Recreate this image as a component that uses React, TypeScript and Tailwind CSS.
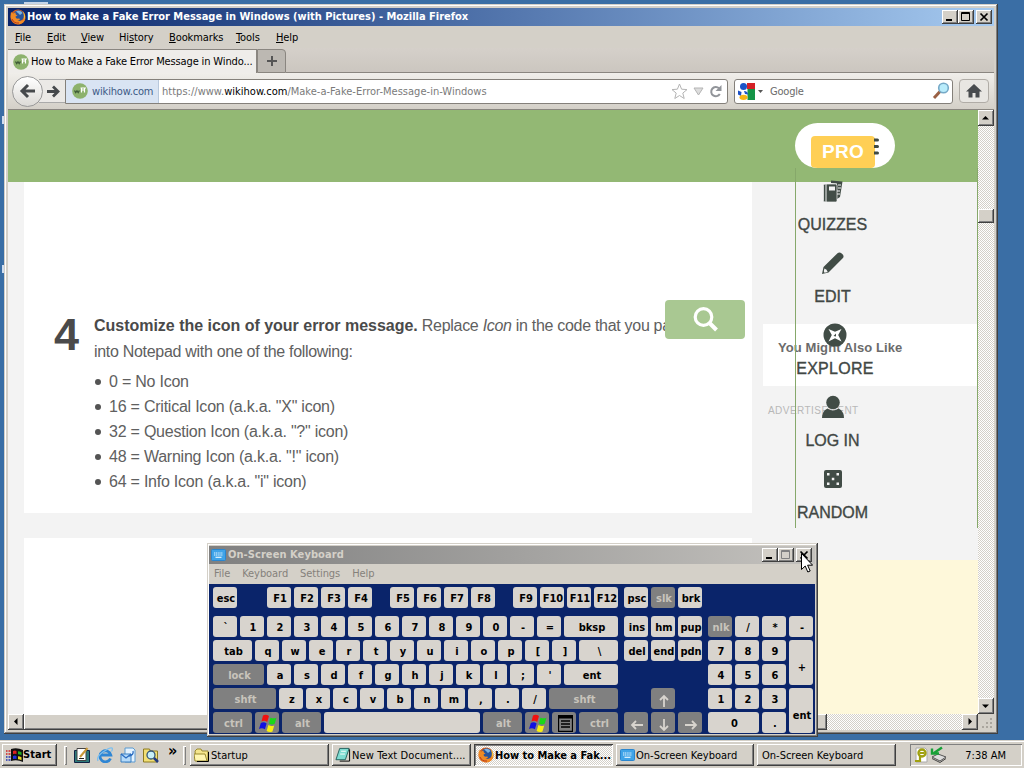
import type { ReactNode } from "react";
import clsx from "clsx";

const RAISED = "bg-[#d4d0c8] shadow-[inset_-1px_-1px_#404040,inset_1px_1px_#fff,inset_-2px_-2px_#808080]";
const DITHER = "bg-[conic-gradient(#fff_25%,#d4d0c8_0_50%,#fff_0_75%,#d4d0c8_0)] bg-[length:2px_2px]";
const UI = "font-['DejaVu_Sans_Condensed','DejaVu_Sans',sans-serif]";

function FirefoxIcon({ size = 16 }: { size?: number }) {
  return (
    <svg width={size} height={size} viewBox="0 0 16 16" className="shrink-0">
      <circle cx="8" cy="8" r="7.6" fill="#d9601a" />
      <circle cx="8.6" cy="6.6" r="5.4" fill="#27549c" />
      <path d="M6 2.5C8 1 11 1.500 12.500 4L10 6L8 4Z" fill="#7db4e0" />
      <path d="M1 3C0 8 1 13 6 15c5 1.500 9-2 9.300-6C13 12 10 12.500 7.500 11.500C10 11.500 10.500 10 9 9.500C7 10 5.500 9 5.600 7.500L7.500 6.500C6 6 5.500 5 5.500 3.500C4 4 3.500 4.500 3 4.500Z" fill="#f08a24" />
      <path d="M13 2.500c2 2 2.500 5 1.800 7l-1.300 1.500c.8-3 .4-6-.5-8.500Z" fill="#f8c73a" />
      <path d="M2 10c1 3 4 4.500 7 4" stroke="#b8381c" strokeWidth="1" fill="none" />
    </svg>
  );
}

function WikiIcon() {
  return (
    <svg width="16" height="16" viewBox="0 0 16 16" className="shrink-0">
      <circle cx="8" cy="8" r="7.800" fill="#8db26d" />
      <path d="M2.500 7.500l1.200 2L5 7.800l1.200 1.700l1.200-2" stroke="#3f5c38" strokeWidth="1.300" fill="none" />
      <path d="M9.500 5v4.500M9.500 7h3M12.500 5v4.500M8.500 5h5.500" stroke="#fff" strokeWidth="1.200" fill="none" />
    </svg>
  );
}

function KeyboardIcon() {
  return (
    <svg width="15" height="12" viewBox="0 0 15 12" className="shrink-0">
      <rect x="0.500" y="0.500" width="14" height="11" rx="1" fill="#3fa4e8" stroke="#2a86cf" />
      <path d="M3 4h9M3 6h9" stroke="#e6f6ff" strokeWidth="1.200" strokeDasharray="1.200 .6" />
      <path d="M4.500 8.300h6" stroke="#e6f6ff" strokeWidth="1.200" />
    </svg>
  );
}

function WinFlag({ size = 20 }: { size?: number }) {
  return (
    <svg width={size} height={size} viewBox="0 0 20 20" className="-mt-[2px]">
      <path d="M5 1.500q3-1.500 6 .5l-1.800 6q-2.700-2-5.700-.5Z" fill="#f01010" />
      <path d="M12.500 3.500q3 1.600 6 .2l-1.800 6q-3 1.500-5.700-.3Z" fill="#18d818" />
      <path d="M2.800 9q3-1.500 5.800.4l-1.700 5.800q-3-1.800-5.900-.3Z" fill="#1010e0" />
      <path d="M10.400 11q3 1.800 5.800.4l-1.700 6q-3 1.500-5.900-.5Z" fill="#f8f010" />
    </svg>
  );
}

function CaptionButton({ kind, faded }: { kind: "min" | "max" | "close"; faded?: boolean }) {
  return (
    <div className={clsx("h-[14px] w-4", RAISED)}>
      <svg width="16" height="14" viewBox="0 0 16 14" fill="none" stroke={faded ? "#808080" : "#000"}>
        {kind === "min" && <path d="M4 10h6" strokeWidth="2" stroke="#000" />}
        {kind === "max" && <path d="M3.500 2.500h8v8h-8zM3 3.500h9" />}
        {kind === "close" && <path d="M4.500 3.500l7 7M11.500 3.500l-7 7" strokeWidth="1.700" stroke="#000" />}
      </svg>
    </div>
  );
}

function ScrollButton({ d }: { d: string }) {
  return (
    <div className={clsx("size-4 shrink-0", RAISED)}>
      <svg width="16" height="16" viewBox="0 0 16 16"><path d={d} /></svg>
    </div>
  );
}

function TitleBar() {
  return (
    <div className="flex h-[18px] items-center bg-linear-to-r from-[#0a246a] to-[#a6caf0] pr-[2px] pl-[2px]">
      <FirefoxIcon />
      <span className="mt-px ml-px text-[11px] font-bold tracking-[-0.01px] whitespace-nowrap text-white">
        How to Make a Fake Error Message in Windows (with Pictures) - Mozilla Firefox
      </span>
      <div className="ml-auto flex">
        <CaptionButton kind="min" />
        <CaptionButton kind="max" />
        <div className="ml-[2px]"><CaptionButton kind="close" /></div>
      </div>
    </div>
  );
}

const menus = [
  { label: "File", w: "w-8" }, { label: "Edit", w: "w-[34px]" }, { label: "View", w: "w-[38px]" },
  { label: "History", w: "w-[50px]" }, { label: "Bookmarks", w: "w-[67px]" },
  { label: "Tools", w: "w-10" }, { label: "Help", w: "w-10" },
];

function MenuBar() {
  return (
    <div className="flex h-[22px] items-center pt-[2px] pl-[7px] text-[11px] tracking-[-0.1px]">
      {menus.map((m) => (
        <span key={m.label} className={clsx(m.w, "shrink-0")}>
          {m.label === "History"
            ? <>Hi<u className="underline-offset-1">s</u>tory</>
            : <><u className="underline-offset-1">{m.label[0]}</u>{m.label.slice(1)}</>}
        </span>
      ))}
    </div>
  );
}

function TabStrip() {
  return (
    <div className="flex h-[25px] bg-linear-to-b from-[#d5d0ca] to-[#cbc6bf] pt-px">
      <div className="flex w-[249px] items-center border-t border-r border-[#8a8680] bg-[#efedea] pl-[5px] text-[11px]">
        <WikiIcon />
        <span className="mt-[2px] ml-[2px] tracking-[-0.14px] whitespace-nowrap">How to Make a Fake Error Message in Windo...</span>
      </div>
      <div className="flex w-[29px] items-center justify-center rounded-tr-sm border border-[#8a8680] bg-[#bcb8b2]">
        <svg width="12" height="12" viewBox="0 0 12 12"><path d="M6 1v10M1 6h10" stroke="#555" strokeWidth="2" /></svg>
      </div>
      <div className="flex-1 border-b border-[#8a8680]" />
    </div>
  );
}

function NavBar() {
  return (
    <div className="flex h-[37px] items-center border-b border-[#8a8680] bg-linear-to-b from-[#f0eeea] to-[#d4d0c8] pl-1 text-[11px]">
      <div className="z-10 flex size-[31px] items-center justify-center rounded-full border border-[#999] bg-linear-to-b from-white to-[#dcdad6]">
        <svg width="17" height="16" viewBox="0 0 17 16"><path d="M9 2L3 8l6 6M3.500 8H16" stroke="#46494c" strokeWidth="3" fill="none" /></svg>
      </div>
      <div className="-ml-1 flex h-6 w-[26px] items-center justify-center border-y border-[#aaa] bg-[#ebe9e6] pl-[2px]">
        <svg width="13" height="13" viewBox="0 0 13 13"><path d="M6 1.500l5 5l-5 5M0 6.500h10" stroke="#46494c" strokeWidth="2.800" fill="none" /></svg>
      </div>
      <div className="flex h-[25px] w-[663px] shrink-0 items-center rounded-r-[3px] border border-[#84807a] bg-white">
        <div className="flex h-full w-[93px] shrink-0 items-center border-r border-[#b8c8dc] bg-[#d9e4f3] pl-[6px]">
          <WikiIcon />
          <span className="mt-[2px] ml-1 tracking-[-0.15px] text-[#3c5a86]">wikihow.com</span>
        </div>
        <span className="mt-[2px] ml-[3px] tracking-[0.02px] whitespace-nowrap text-[#7a7a7a]">
          https://www.<span className="text-black">wikihow.com</span>/Make-a-Fake-Error-Message-in-Windows
        </span>
        <div className="mr-[5px] ml-auto flex items-center gap-[5px]">
          <svg width="17" height="17" viewBox="0 0 17 17"><path d="M8.500 1l2.100 5.200l5.400.4l-4.200 3.500l1.400 5.400l-4.700-3l-4.700 3l1.400-5.400L1 6.600l5.400-.4Z" fill="#fff" stroke="#b4b4b4" /></svg>
          <svg width="11" height="9" viewBox="0 0 11 9"><path d="M1 1h9L5.500 8Z" fill="#ddd" stroke="#b4b4b4" /></svg>
          <svg width="13" height="13" viewBox="0 0 13 13"><path d="M10 3.300A4.600 4.600 0 1 0 10.800 9" fill="none" stroke="#92959a" strokeWidth="2" /><path d="M12.500 0v6h-6Z" fill="#92959a" /></svg>
        </div>
      </div>
      <div className="ml-[6px] flex h-[25px] w-[219px] shrink-0 items-center rounded-[3px] border border-[#84807a] bg-white pl-[3px]">
        <svg width="17" height="17" viewBox="0 0 17 17">
          <path d="M9 0h8v6H9Z" fill="#d42127" />
          <path d="M9.500 6H17v11H9.500Z" fill="#159447" />
          <circle cx="5.500" cy="3.500" r="3.500" fill="#1b54c8" />
          <path d="M0 7.500l3.500 1.500l-.5 4l-3-1.500Z" fill="#1b4fc4" />
          <path d="M6 8q4 0 4 3.500L7 11Z" fill="#1b54c8" />
          <ellipse cx="5.500" cy="14.300" rx="4" ry="2.600" fill="#f4b515" />
        </svg>
        <svg width="5" height="3" viewBox="0 0 5 3" className="ml-[3px]"><path d="M0 0h5L2.500 3Z" fill="#555" /></svg>
        <span className="mt-[2px] ml-[7px] tracking-[-0.2px] text-[#6a6a6a]">Google</span>
        <svg width="18" height="18" viewBox="0 0 18 18" className="mr-[2px] ml-auto">
          <path d="M2 16L8 9.500" stroke="#9a6044" strokeWidth="3" /><circle cx="11.500" cy="6" r="4.800" fill="#b9ecfb" stroke="#76a9c7" strokeWidth="1.600" />
        </svg>
      </div>
      <div className="ml-[6px] flex h-6 w-[30px] items-center justify-center rounded-sm border border-[#b0aca6] bg-[#e8e6e2]">
        <svg width="16" height="14" viewBox="0 0 16 14"><path d="M8 0L16 7.500H13.500V13.500H9.500V9H6.500V13.500H2.500V7.500H0Z" fill="#484b4e" /></svg>
      </div>
    </div>
  );
}

const iconCodes = [
  "0 = No Icon",
  '16 = Critical Icon (a.k.a. "X" icon)',
  '32 = Question Icon (a.k.a. "?" icon)',
  '48 = Warning Icon (a.k.a. "!" icon)',
  '64 = Info Icon (a.k.a. "i" icon)',
];

function Article() {
  return (
    <div className="flex w-[728px] shrink-0 flex-col gap-[25px] font-['Liberation_Sans',Arial,sans-serif] text-[16px] text-[#606060]">
      <div className="flex h-[331px] bg-white pt-[131px] pl-[30px]">
        <div className="mt-[-3px] w-10 text-[45px] leading-[50px] font-bold text-[#4a4a4a]">4</div>
        <div>
          <p className="leading-[26px] tracking-[-0.3px] whitespace-nowrap">
            <b className="tracking-[-0.02px] text-[#4a4a4a]">Customize the icon of your error message.</b> Replace <i>Icon</i> in the code that you pasted
            <br />
            into Notepad with one of the following:
          </p>
          <ul className="mt-1 leading-[25px] tracking-[-0.23px]">
            {iconCodes.map((t) => (
              <li key={t} className="flex items-center">
                <span className="mt-px mr-2 ml-px size-[6px] rounded-full bg-[#545454]" />
                {t}
              </li>
            ))}
          </ul>
        </div>
      </div>
      <div className="flex-1 bg-white" />
    </div>
  );
}

const sideItems: { label: string; icon: ReactNode }[] = [
  {
    label: "QUIZZES",
    icon: (
      <svg width="24" height="24" viewBox="0 0 24 24" fill="#414c46">
        <path d="M10 1.500L21.500 2.500L19 18L16 20V4.500L10 4Z" /><path d="M17 6h3M17 9h3M16 12h3M16 15h3" stroke="#f3f3f3" strokeWidth="1.200" />
        <path d="M4 5h10.500q1.500 0 1.500 1.500v15q0 1.500-1.500 1.500H4q-1.500 0-1.500-1.500v-15Q2.500 5 4 5Z" stroke="#f3f3f3" strokeWidth=".7" /><path d="M5 5v18" stroke="#f3f3f3" strokeWidth="1" /><path d="M8 7.500h6v4H8Z" fill="#f3f3f3" />
      </svg>
    ),
  },
  {
    label: "EDIT",
    icon: (
      <svg width="24" height="24" viewBox="0 0 24 24">
        <path d="M1 23l1.500-7L16.500 2.200q2-1.700 4.200.3l.8.800q2 2 .2 4L7.500 21.500Z" fill="#414c46" /><path d="M3.500 17.500q2.500.5 3.200 3.500l-3 .7q-1.500-.6-.2-4.200Z" fill="#f3f3f3" />
      </svg>
    ),
  },
  {
    label: "EXPLORE",
    icon: (
      <svg width="24" height="24" viewBox="0 0 24 24">
        <circle cx="12" cy="12" r="11.500" fill="#414c46" />
        <path d="M5.500 6L12 8.800L18.500 6L15.200 12L18.500 18.500L12 15.300L5.500 18.500L8.800 12Z" fill="#fff" />
        <path d="M13 10.500v3L10.500 13Z" fill="#414c46" />
      </svg>
    ),
  },
  {
    label: "LOG IN",
    icon: (
      <svg width="24" height="24" viewBox="0 0 24 24" fill="#414c46">
        <circle cx="12" cy="7.500" r="6.800" /><path d="M1 23q0-7 5.500-9.500q5.500 4 11 0Q23 16 23 23Z" />
      </svg>
    ),
  },
  {
    label: "RANDOM",
    icon: (
      <svg width="24" height="24" viewBox="0 0 24 24">
        <rect x="3" y="3" width="18" height="18" rx="2" fill="#414c46" />
        <path d="M6 6h2.500v2.500H6zM15.500 6H18v2.500h-2.500zM10.800 10.800h2.500v2.500h-2.500zM6 15.500h2.500V18H6zM15.500 15.500H18V18h-2.500z" fill="#f3f3f3" />
      </svg>
    ),
  },
];

function SideMenu() {
  return (
    <div className="absolute top-[58px] left-[787px] h-[360px] w-[183px] border-x border-[#86a86a] pt-[11px] font-['Liberation_Sans',Arial,sans-serif]">
      {sideItems.map((s) => (
        <div key={s.label} className={clsx("flex h-[72px] flex-col items-center", s.label === "EXPLORE" ? "w-[78px] tracking-[0.3px]" : "w-[73px]")}>
          {s.icon}
          <span className="mt-3 text-[16px] leading-5 whitespace-nowrap text-[#414744] [-webkit-text-stroke:0.35px_#414744]">{s.label}</span>
        </div>
      ))}
    </div>
  );
}

function Page() {
  return (
    <div className="relative flex h-[604px] w-[970px] flex-col overflow-hidden bg-[#f3f3f3]">
      <div className="flex h-[72px] shrink-0 items-start bg-[#93b874] pt-[13px] pl-[787px]">
        <div className="flex h-[45px] w-[100px] items-end overflow-hidden rounded-full bg-white pl-4">
          <div className="flex h-8 w-16 items-center justify-center rounded-[4px] bg-[#ffcf55] pt-px font-['Liberation_Sans',Arial,sans-serif] text-[19px] font-bold tracking-[0.3px] text-white">PRO</div>
          <svg width="5" height="17" viewBox="0 0 5 17" className="-ml-px mb-[13px]"><path d="M0 2h3.500M0 8.500h3.500M0 15h3.500" stroke="#3f4a44" strokeWidth="3" strokeLinecap="round" /></svg>
        </div>
      </div>
      <div className="flex flex-1 pl-4">
        <Article />
        <div className="ml-[11px] flex w-[215px] flex-col pt-[142px] font-['Liberation_Sans',Arial,sans-serif]">
          <div className="flex h-[62px] items-center bg-white pb-[15px] pl-[15px] text-[13px] font-bold tracking-[0.08px] text-[#6b6b6b]">You Might Also Like</div>
          <div className="mt-[17px] pl-[5px] text-[10px] leading-4 tracking-[0.45px] text-[#b8b8b8]">ADVERTISEMENT</div>
          <div className="mt-[141px] flex-1 bg-[#fef8da]" />
        </div>
      </div>
      <SideMenu />
      {/* floating search button */}
      <div className="absolute top-[190px] left-[657px] flex h-[39px] w-20 items-center justify-center rounded-[4px] bg-[#a9c892]">
        <svg width="27" height="27" viewBox="0 0 27 27" fill="none" stroke="#fff" strokeWidth="3.200"><circle cx="11.500" cy="11" r="8.300" /><path d="M17.500 17l7 7" strokeWidth="4" /></svg>
      </div>
    </div>
  );
}

function BrowserWindow() {
  return (
    <div className="absolute top-1 left-1 w-[994px] bg-[#d4d0c8] p-1 shadow-[inset_-1px_-1px_#404040,inset_1px_1px_#d4d0c8,inset_-2px_-2px_#808080,inset_2px_2px_#fff]">
      <TitleBar />
      <MenuBar />
      <TabStrip />
      <NavBar />
      <div className="flex">
        <Page />
        <div className={clsx("flex h-[604px] w-4 flex-col", DITHER)}>
          <ScrollButton d="M4 9.500h7L7.500 6Z" />
          <div className={clsx("mt-[83px] h-[14px]", RAISED)} />
          <div className="mt-auto"><ScrollButton d="M4 6.500h7L7.500 10Z" /></div>
        </div>
      </div>
      <div className="flex h-4">
        <div className={clsx("flex w-[970px]", DITHER)}>
          <ScrollButton d="M9.500 4v7L6 7.500Z" />
          <div className={clsx("w-[803px]", RAISED)} />
          <div className="ml-auto"><ScrollButton d="M6.500 4v7L10 7.500Z" /></div>
        </div>
        <svg width="16" height="16" viewBox="0 0 16 16" fill="#aaa69e"><path d="M12 4h2v2h-2zM8 8h2v2H8zM12 8h2v2h-2zM4 12h2v2H4zM8 12h2v2H8zM12 12h2v2h-2z" /></svg>
      </div>
    </div>
  );
}

type KeyDef = { k: ReactNode; w?: string; dark?: boolean; ml?: string };

function Key({ k, w = "w-6", dark, ml, tall }: KeyDef & { tall?: boolean }) {
  return (
    <div
      className={clsx(
        "flex shrink-0 items-center justify-center overflow-hidden rounded-[3px] pl-[2px] text-[11px] font-bold whitespace-nowrap",
        w, ml, tall ? "h-[45px] pt-3" : "h-[21px] pt-1",
        dark ? "bg-[#808080] text-[#c8c4bc]" : "bg-[#d8d4ce] text-black",
      )}
    >
      {k}
    </div>
  );
}

const keysOf = (s: string): KeyDef[] => s.split(" ").map((k) => ({ k }));

const menuGlyph = (
  <svg width="15" height="17" viewBox="0 0 15 17" className="-mt-[3px]"><path d="M.5.500h14v16H.5ZM3 6h9M3 9h9M3 12h9" fill="#808080" stroke="#000" strokeWidth="1.300" /><path d="M1 2h13" stroke="#000" strokeWidth="3" /></svg>
);

function Arrow({ d }: { d: string }) {
  return <svg width="14" height="14" viewBox="0 0 14 14"><path d={d} fill="none" stroke="#d8d4ce" strokeWidth="1.800" /></svg>;
}

const fRow: KeyDef[] = [
  { k: "esc" }, { k: "F1", ml: "ml-[27px]" }, ...keysOf("F2 F3 F4"),
  { k: "F5", ml: "ml-[15px]" }, ...keysOf("F6 F7 F8"),
  { k: "F9", ml: "ml-[15px]" }, ...keysOf("F10 F11 F12"),
];

const mainRows: KeyDef[][] = [
  [...keysOf("` 1 2 3 4 5 6 7 8 9 0 - ="), { k: "bksp", w: "w-[54px]" }],
  [{ k: "tab", w: "w-[39px]" }, ...keysOf("q w e r t y u i o p [ ]"), { k: "\\", w: "w-[39px]" }],
  [{ k: "lock", w: "w-[51px]", dark: true }, ...keysOf("a s d f g h j k l ; '"), { k: "ent", w: "w-[54px]" }],
  [{ k: "shft", w: "w-[63px]", dark: true }, ...keysOf("z x c v b n m , . /"), { k: "shft", w: "w-[69px]", dark: true }],
  [
    { k: "ctrl", w: "w-[39px]", dark: true }, { k: <WinFlag />, dark: true }, { k: "alt", w: "w-[39px]", dark: true },
    { k: "", w: "w-[156px]" },
    { k: "alt", w: "w-[39px]", dark: true }, { k: <WinFlag />, dark: true }, { k: menuGlyph, dark: true }, { k: "ctrl", w: "w-[39px]", dark: true },
  ],
];

function KeyRow({ keys }: { keys: KeyDef[] }) {
  return <div className="flex gap-[3px]">{keys.map((key, i) => <Key key={i} {...key} />)}</div>;
}

function OnScreenKeyboard() {
  return (
    <div className="absolute top-[543px] left-[207px] h-[194px] w-[611px] bg-[#d4d0c8] p-[3px] pl-[2px] shadow-[inset_-1px_-1px_#404040,inset_1px_1px_#d4d0c8,inset_-2px_-2px_#808080,inset_2px_2px_#fff]">
      <div className="flex h-[18px] items-center bg-linear-to-r from-[#808080] to-[#c4c2be] pr-[3px] pl-[2px]">
        <KeyboardIcon />
        <span className="mt-px ml-[2px] text-[11px] font-bold tracking-[0.07px] text-[#d4d0c8]">On-Screen Keyboard</span>
        <div className="ml-auto flex">
          <CaptionButton kind="min" />
          <CaptionButton kind="max" faded />
          <div className="ml-[2px]"><CaptionButton kind="close" /></div>
        </div>
      </div>
      <div className="flex h-5 items-center gap-[12px] pt-px pl-[5px] text-[11px] tracking-[-0.07px] text-[#85817b]">
        <span>File</span><span>Keyboard</span><span>Settings</span><span>Help</span>
      </div>
      <div className="flex h-[150px] gap-[6px] bg-[#0a246a] pt-[3px] pl-1">
        <div className="flex w-[405px] flex-col gap-[3px]">
          <div className="mb-[5px]"><KeyRow keys={fRow} /></div>
          {mainRows.map((r, i) => <KeyRow key={i} keys={r} />)}
        </div>
        <div className="flex w-[78px] flex-col gap-[3px]">
          <div className="mb-[5px]"><KeyRow keys={[{ k: "psc" }, { k: "slk", dark: true }, { k: "brk" }]} /></div>
          <KeyRow keys={keysOf("ins hm pup")} />
          <KeyRow keys={keysOf("del end pdn")} />
          <div className="mt-6"><KeyRow keys={[{ k: <Arrow d="M7 13V2M3 6l4-4l4 4" />, dark: true, ml: "ml-[27px]" }]} /></div>
          <KeyRow
            keys={[
              { k: <Arrow d="M13 7H2M6 3L2 7l4 4" />, dark: true },
              { k: <Arrow d="M7 1v11M3 8l4 4l4-4" />, dark: true },
              { k: <Arrow d="M1 7h11M8 3l4 4l-4 4" />, dark: true },
            ]}
          />
        </div>
        <div className="flex flex-col gap-[3px] pt-[29px]">
          <KeyRow keys={[{ k: "nlk", dark: true }, ...keysOf("/ * -")]} />
          <div className="flex gap-[3px]">
            <div className="flex flex-col gap-[3px]">
              <KeyRow keys={keysOf("7 8 9")} />
              <KeyRow keys={keysOf("4 5 6")} />
              <KeyRow keys={keysOf("1 2 3")} />
              <KeyRow keys={[{ k: "0", w: "w-[51px]" }, { k: "." }]} />
            </div>
            <div className="flex flex-col gap-[3px]">
              <Key k="+" tall />
              <Key k="ent" tall />
            </div>
          </div>
        </div>
      </div>
    </div>
  );
}

const tasks: { label: string; w: string; icon?: ReactNode; active?: boolean }[] = [
  {
    label: "Startup", w: "w-[139px]",
    icon: <svg width="16" height="14" viewBox="0 0 16 14"><path d="M1 3l2-2h4l1 2h6v10H2Z" fill="#f5e68c" stroke="#9a8a30" /><path d="M1 13L0 6h11l2 7Z" fill="#fff6b0" stroke="#9a8a30" /><path d="M14.500 4v9.500H3" fill="none" stroke="#000" /></svg>,
  },
  {
    label: "New Text Document....", w: "w-[139px] tracking-[0.1px]",
    icon: <svg width="16" height="16" viewBox="0 0 17 16" className="-ml-px"><path d="M5 1h10L11 13H1Z" fill="#7fdcd2" stroke="#20605c" /><path d="M6.500 4h5M5.500 7h5" stroke="#fff" /><path d="M15.500 2v12.500H5" fill="none" stroke="#000" /></svg>,
  },
  { label: "How to Make a Fak...", w: "w-[139px]", icon: <FirefoxIcon />, active: true },
  { label: "On-Screen Keyboard", w: "w-[138px]", icon: <KeyboardIcon /> },
  { label: "On-Screen Keyboard", w: "w-[139px]" },
];

function Divider() {
  return <div className="h-[19px] w-[3px] bg-[#d4d0c8] shadow-[inset_1px_1px_#fff,inset_-1px_-1px_#808080]" />;
}

function Taskbar() {
  return (
    <div className="absolute bottom-0 left-0 flex h-7 w-full items-center border-t border-[#d4d0c8] bg-[#d4d0c8] pt-px pl-[2px] text-[11px] shadow-[inset_0_1px_#fff]">
      <div className={clsx("flex h-[22px] w-[55px] items-center pl-1 font-bold", RAISED)}>
        <svg width="17" height="15" viewBox="0 0 17 15">
          <path d="M5 1q6-2 12 1v12q-6-3-12-1Z" fill="#111" /><path d="M7 3q2-.8 3.500 0v3Q9 5.300 7 6Z" fill="#e02020" /><path d="M12 3.300q2 0 3.500 1v3Q14 6.500 12 6.300Z" fill="#20b020" /><path d="M7 8q2-.8 3.500 0v3Q9 10.300 7 11Z" fill="#2030e0" /><path d="M12 8.300q2 0 3.500 1v3q-1.500-.8-3.500-1Z" fill="#e8d820" />
          <path d="M0 3h1.500M2.500 3h2M0 6h1.500M2.500 6h2" stroke="#d02020" strokeWidth="1.500" /><path d="M0 9h1.500M2.500 9h2M0 12h1.500M2.500 12h2" stroke="#2030b0" strokeWidth="1.500" />
        </svg>
        <span className="mt-px tracking-[0.05px]">Start</span>
      </div>
      <div className="ml-[7px]"><Divider /></div>
      <div className="ml-[7px] flex w-[109px] items-center gap-[7px]">
        <svg width="16" height="16" viewBox="0 0 16 16"><path d="M.5 3.500h15v12H.5Z" fill="#2d7a7a" stroke="#124" /><path d="M3 1.500h9v12H3Z" fill="#fff" stroke="#444" /><path d="M6 10L13.500 1" stroke="#c89838" strokeWidth="2" /><path d="M5 11.500h5" stroke="#222" /></svg>
        <svg width="16" height="16" viewBox="0 0 16 16" fill="none"><path d="M13.500 11.500A5.500 5.500 0 1 1 13.800 8H4" stroke="#2f86d4" strokeWidth="2.800" /><path d="M1 14Q-1 10 6 5T15 1q1 1-.5 3.500" stroke="#7cc0f0" strokeWidth="1.300" /></svg>
        <svg width="16" height="16" viewBox="0 0 16 16"><path d="M5 1h8l2 2v12H5Z" fill="#e3f2ff" stroke="#5a9ad0" /><path d="M1 7h10v8H1Z" fill="#b4dafa" stroke="#3a7ec0" /><path d="M1 7l5 4l5-4M13 4q1 4-4 5" stroke="#2a6cc0" fill="none" strokeWidth="1.300" /></svg>
        <svg width="16" height="16" viewBox="0 0 16 16"><path d="M.5 2h6l1 2h7v11H.5Z" fill="#f2df74" stroke="#8c7a20" /><circle cx="8" cy="8" r="4" fill="#c8f0f8" stroke="#357" strokeWidth="1.300" /><path d="M11 11l4 4" stroke="#223a80" strokeWidth="2.500" /></svg>
        <span className="mt-[-8px] ml-[2px] text-[16px] leading-4 font-bold">»</span>
      </div>
      <div className="mr-[4px]"><Divider /></div>
      <div className="flex gap-[3px]">
        {tasks.map((t, i) => (
          <div
            key={i}
            className={clsx(
              "flex h-[22px] items-center overflow-hidden pl-1 whitespace-nowrap",
              t.w,
              t.active ? clsx(DITHER, "font-bold tracking-[-0.02px] shadow-[inset_1px_1px_#404040,inset_-1px_-1px_#fff,inset_2px_2px_#808080]") : RAISED,
            )}
          >
            {t.icon}
            <span className="mt-[2px] ml-px">{t.label}</span>
          </div>
        ))}
      </div>
      <div className="mr-[2px] ml-auto flex h-[22px] w-[112px] items-center pl-1 shadow-[inset_1px_1px_#808080,inset_-1px_-1px_#fff]">
        <svg width="14" height="16" viewBox="0 0 14 16"><path d="M2 1h9l2 2v12H2Z" fill="#fff" stroke="#aaa" /><circle cx="8" cy="6" r="3.500" fill="none" stroke="#a0a010" strokeWidth="2.400" /><path d="M6 9v5H1M6 6h4" fill="none" stroke="#a0a010" strokeWidth="2.200" /></svg>
        <svg width="18" height="18" viewBox="0 0 18 18" className="ml-px"><path d="M3 11l6-3l8 3l-6 4Z" fill="#ddd" stroke="#555" /><path d="M3 12.500l8 4l6-4" fill="none" stroke="#444" /><path d="M13 1.500L5 7M3 2.500v5h7" fill="none" stroke="#18a038" strokeWidth="2.400" /></svg>
        <span className="mt-[2px] ml-auto pr-4">7:38 AM</span>
      </div>
    </div>
  );
}

export default function App() {
  return (
    <div className={clsx("relative h-[768px] w-[1024px] overflow-hidden bg-[#3a6ea5] text-black", UI)}>
      {/* slivers of desktop icons behind the window */}
      <div className="absolute top-[2px] left-6 h-1 w-6 bg-[#c5d5e8]" />
      <div className="absolute top-[116px] left-[2px] h-2 w-[2px] bg-[#d0def0]" />
      <div className="absolute top-[265px] left-[2px] h-2 w-[2px] bg-[#d0def0]" />
      <BrowserWindow />
      <OnScreenKeyboard />
      <Taskbar />
      <svg width="12" height="20" viewBox="0 0 12 20" className="absolute top-[553px] left-[801px]">
        <path d="M.5.500v16l3.700-3.500l2.600 6l2.400-1l-2.600-5.800h5Z" fill="#fff" stroke="#000" />
      </svg>
    </div>
  );
}
